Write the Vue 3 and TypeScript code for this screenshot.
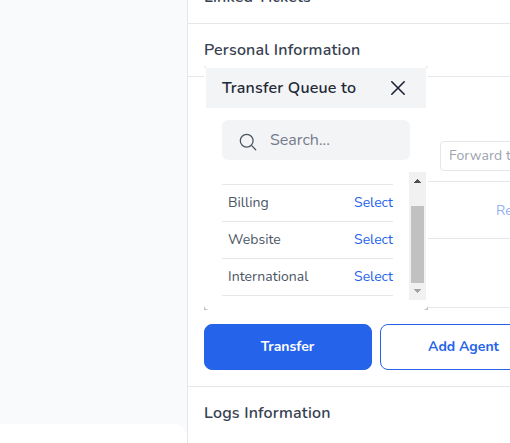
<script setup lang="ts">
import { ref } from 'vue'

interface Queue {
  id: number
  name: string
}

const queues: Queue[] = [
  { id: 1, name: 'Billing' },
  { id: 2, name: 'Website' },
  { id: 3, name: 'International' },
]

const search = ref('')
</script>

<template>
  <div class="page">
    <aside class="chat">
      <div class="composer"></div>
    </aside>
    <main class="details">
      <section class="row linked"><h2>Linked Tickets</h2></section>
      <section class="row personal"><h2>Personal Information</h2></section>
      <section class="row forward">
        <div class="field">Forward to</div>
      </section>
      <section class="row reset"><span>Reset</span></section>
      <section class="row blank"></section>
      <section class="row actions">
        <button class="btn primary">Transfer</button>
        <button class="btn outline">Add Agent</button>
      </section>
      <section class="logs"><h2>Logs Information</h2></section>

      <div class="popup">
        <div class="sheet">
          <header class="head">
            <h3>Transfer Queue to</h3>
            <svg width="16" height="16" viewBox="0 0 16 16" fill="none" stroke="#1a2233" stroke-width="1.6" stroke-linecap="round">
              <path d="M1.8 1.8 14.2 14.2M14.2 1.8 1.8 14.2" />
            </svg>
          </header>
          <label class="search">
            <svg width="18" height="18" viewBox="0 0 18 18" fill="none" stroke="#4b5563" stroke-width="1.3" stroke-linecap="round">
              <circle cx="7.7" cy="7.7" r="6.4" />
              <path d="m12.4 12.4 4.3 4.3" />
            </svg>
            <input v-model="search" type="text" placeholder="Search..." />
          </label>
          <div class="body">
            <ul class="list">
              <li v-for="queue in queues" :key="queue.id">
                <span class="name">{{ queue.name }}</span>
                <a class="select">Select</a>
              </li>
            </ul>
            <div class="scrollbar">
              <svg class="arrow" width="17" height="17" viewBox="0 0 17 17" shape-rendering="crispEdges"><path d="M8 7h1v1h1v1h1v1h1v1H5v-1h1V9h1V8h1z" fill="#505050" /></svg>
              <div class="thumb"></div>
              <svg class="arrow" width="17" height="17" viewBox="0 0 17 17" shape-rendering="crispEdges"><path d="M5 6h7v1h-1v1h-1v1H9v1H8V9H7V8H6V7H5z" fill="#a3a3a3" /></svg>
            </div>
          </div>
        </div>
      </div>
    </main>
  </div>
</template>

<style>
body {
  overflow: hidden;
}
</style>

<style scoped>
* {
  box-sizing: border-box;
}
.page {
  display: flex;
  width: 510px;
  height: 443px;
  overflow: hidden;
  background: #fff;
  font-family: Nunito, Lato, sans-serif;
  font-size: 14px;
  color: #4b5563;
}
.chat {
  display: flex;
  flex-direction: column;
  justify-content: flex-end;
  width: 187px;
  flex: none;
  background: #f9fafb;
}
.composer {
  height: 19px;
  background: #fff;
  border-top-right-radius: 14px;
}
.details {
  position: relative;
  flex: 1;
  min-width: 0;
  border-left: 1px solid #e5e7eb;
}
.row {
  display: flex;
  align-items: center;
  border-bottom: 1px solid #e5e7eb;
  padding-left: 16px;
}
h2,
h3 {
  margin: 0;
  font-size: 16px;
  line-height: 24px;
  font-weight: 600;
  letter-spacing: 0.19px;
  white-space: nowrap;
}
h2 {
  color: #374151;
}
.linked {
  height: 24px;
  align-items: flex-start;
}
.linked h2 {
  margin-top: -15px;
}
.personal {
  height: 53px;
}
.forward,
.reset,
.blank {
  margin-left: 16px;
}
.forward {
  height: 105px;
  padding-left: 236px;
  padding-top: 53px;
}
.field {
  flex: none;
  width: 120px;
  height: 30px;
  padding-left: 8px;
  line-height: 28px;
  border: 1px solid #e5e7eb;
  border-radius: 4px;
  color: #9ca3af;
  letter-spacing: 0.08px;
}
.reset {
  height: 57px;
  padding-left: 292px;
  color: #92b1f5;
}
.blank {
  height: 69px;
}
.actions {
  height: 79px;
  gap: 8px;
}
.btn {
  flex: none;
  width: 168px;
  height: 46px;
  padding: 0 1px 1px 0;
  border-radius: 8px;
  border: 1px solid #2563eb;
  background: #fff;
  color: #2563eb;
  font: inherit;
  font-weight: 700;
}
.primary {
  background: #2563eb;
  color: #fff;
}
.logs {
  height: 52px;
  display: flex;
  align-items: center;
  padding-left: 16px;
}
.popup {
  position: absolute;
  left: 16px;
  top: 66px;
  width: 224px;
  height: 244px;
  background: linear-gradient(#f0f0f0, #c0c0c0);
}
.sheet {
  height: 100%;
  padding: 2px;
  background: #fff;
  border-radius: 5px;
}
.head {
  display: flex;
  align-items: center;
  justify-content: space-between;
  height: 40px;
  padding: 0 20px 0 16px;
  background: #f3f4f6;
}
h3 {
  color: #1f2937;
}
.search {
  display: flex;
  align-items: center;
  gap: 13px;
  width: 188px;
  height: 40px;
  margin: 12px 16px;
  padding: 0 0 0 17px;
  background: #f3f4f6;
  border-radius: 6px;
}
.search svg {
  flex: none;
  margin-top: 3px;
}
.search input {
  min-width: 0;
  width: 120px;
  padding: 0;
  border: 0;
  outline: 0;
  background: transparent;
  font: 16px Nunito, Lato, sans-serif;
}
.search input::placeholder {
  color: #737b8b;
}
.body {
  display: flex;
  height: 128px;
}
.list {
  width: 171px;
  margin: 12px 16px 0;
  padding: 0;
  list-style: none;
  border-top: 1px solid #e5e7eb;
  height: 112px;
}
.list li {
  display: flex;
  align-items: center;
  justify-content: space-between;
  height: 37px;
  padding: 0 0 2px 6px;
  border-bottom: 1px solid #e5e7eb;
}
.name {
  letter-spacing: 0.06px;
}
.select {
  color: #2563eb;
}
.scrollbar {
  display: flex;
  flex-direction: column;
  align-items: center;
  justify-content: space-between;
  flex: none;
  width: 17px;
  background: #f1f1f1;
}
.arrow {
  display: block;
}
.thumb {
  width: 13px;
  height: 77px;
  margin-top: 17px;
  background: #c1c1c1;
}
</style>
